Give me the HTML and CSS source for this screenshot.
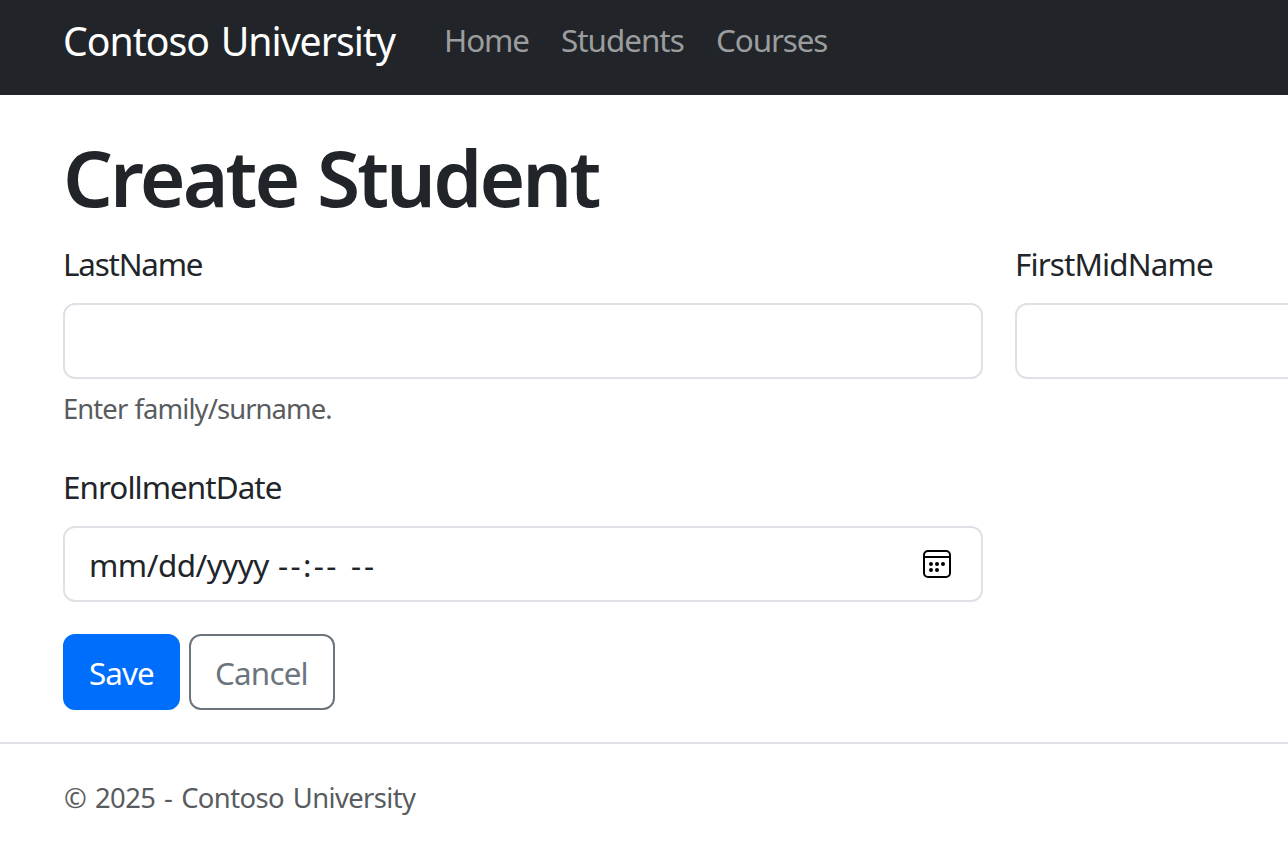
FILE: index.html
```html
<!DOCTYPE html>
<html lang="en">
<head>
<meta charset="utf-8">
<title>Create Student - Contoso University</title>
<link rel="stylesheet" href="styles.css">
</head>
<body>
<header class="navbar">
  <a class="brand">Contoso University</a>
  <nav class="nav">
    <a class="nav-home">Home</a>
    <a class="nav-students">Students</a>
    <a class="nav-courses">Courses</a>
  </nav>
</header>
<main class="main">
  <h1 class="title">Create Student</h1>
  <form class="form">
    <div class="field">
      <label class="label label-last">LastName</label>
      <div class="control"></div>
      <div class="hint">Enter family/surname.</div>
    </div>
    <div class="field">
      <label class="label label-first">FirstMidName</label>
      <div class="control control-open"></div>
    </div>
    <div class="field">
      <label class="label label-date">EnrollmentDate</label>
      <div class="control control-date">
        <span class="date-part">mm/dd/yyyy</span>
        <span class="time-part">--:--</span>
        <span class="meridiem-part">--</span>
        <svg class="calendar" width="28" height="28" viewBox="0 0 28 28">
          <rect x="1" y="1" width="26" height="26" rx="4" fill="none" stroke="#000" stroke-width="2"/>
          <path d="M1 7H27" stroke="#000" stroke-width="2"/>
          <circle cx="8" cy="14" r="2"/><circle cx="14" cy="14" r="2"/><circle cx="20" cy="14" r="2"/>
          <circle cx="8" cy="20" r="2"/><circle cx="14" cy="20" r="2"/>
        </svg>
      </div>
    </div>
  </form>
  <div class="actions">
    <a class="btn btn-save">Save</a>
    <a class="btn btn-cancel">Cancel</a>
  </div>
</main>
<footer class="footer">© 2025 - Contoso University</footer>
</body>
</html>
```
FILE: styles.css
```css
* { box-sizing: border-box; }
body {
  margin: 0;
  height: 844px;
  overflow: hidden;
  background: #fff;
  color: #212529;
  font: 31.4px/48px "Noto Sans", "Open Sans", sans-serif;
  white-space: nowrap;
}
.navbar {
  display: flex;
  height: 95px;
  padding-left: 63px;
  background: #212529;
}
.brand {
  width: 381px;
  color: #fff;
  font-size: 39.2px;
  line-height: 82px;
  letter-spacing: -1px;
  word-spacing: 2.5px;
}
.nav { display: flex; color: #9b9d9e; line-height: 80px; }
.nav-home { width: 117px; letter-spacing: -1.1px; }
.nav-students { width: 155px; letter-spacing: -1px; }
.nav-courses { letter-spacing: -1.1px; }
.main { padding: 32px 0 0 63px; }
.title {
  height: 96px;
  margin: 0 0 16px;
  font-size: 78.4px;
  line-height: 99px;
  font-weight: 600;
  letter-spacing: -2.9px;
  word-spacing: 2px;
}
.form {
  display: grid;
  grid-template-columns: 920px 1fr;
  column-gap: 32px;
  row-gap: 32px;
}
.label {
  display: block;
  height: 48px;
  margin-bottom: 16px;
  line-height: 50px;
}
.label-last { letter-spacing: -1.2px; }
.label-first { letter-spacing: -0.85px; }
.label-date { letter-spacing: -0.95px; }
.control {
  display: flex;
  height: 76px;
  border: 2px solid #dee2e6;
  border-radius: 12px;
  line-height: 74px;
}
.control-open {
  border-right: 0;
  border-radius: 12px 0 0 12px;
}
.hint {
  height: 43px;
  margin-top: 8px;
  color: #595c5f;
  font-size: 27.4px;
  line-height: 43px;
  letter-spacing: -0.9px;
  word-spacing: 1px;
}
.control-date { padding-left: 24px; }
.date-part { width: 189px; letter-spacing: -0.5px; }
.time-part { width: 73px; letter-spacing: 2.4px; }
.meridiem-part { letter-spacing: 3px; }
.calendar { margin: 22px 30px 0 auto; }
.actions { display: flex; gap: 9px; margin-top: 32px; }
.btn {
  height: 76px;
  border: 2px solid;
  border-radius: 12px;
  padding-left: 24px;
  line-height: 74px;
}
.btn-save { width: 117px; background: #006efd; border-color: #006efd; color: #fff; letter-spacing: -0.9px; }
.btn-cancel { width: 146px; border-color: #6c757d; color: #6c757d; letter-spacing: -0.8px; }
.footer {
  height: 102px;
  margin-top: 32px;
  padding-left: 64px;
  border-top: 2px solid #dee2e6;
  color: #595c5f;
  font-size: 27.4px;
  line-height: 107px;
  letter-spacing: -0.6px;
  word-spacing: 2.3px;
}
```
